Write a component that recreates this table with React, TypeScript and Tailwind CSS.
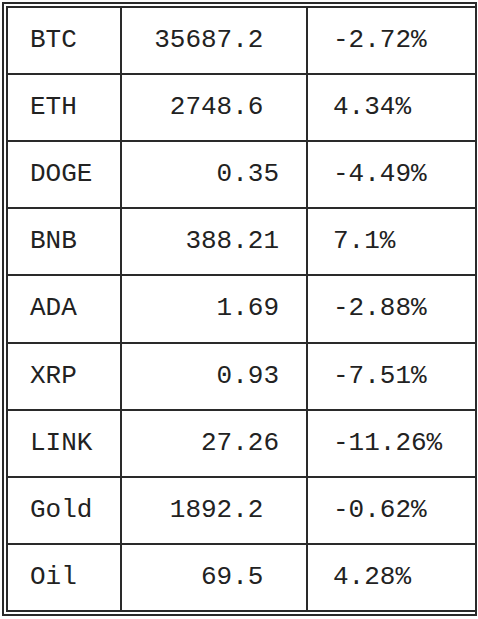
import React from 'react';

type Row = { sym: string; price: string; change: string };

const rows: Row[] = [
  { sym: 'BTC', price: '35687.2', change: '-2.72%' },
  { sym: 'ETH', price: '2748.6', change: '4.34%' },
  { sym: 'DOGE', price: '0.35', change: '-4.49%' },
  { sym: 'BNB', price: '388.21', change: '7.1%' },
  { sym: 'ADA', price: '1.69', change: '-2.88%' },
  { sym: 'XRP', price: '0.93', change: '-7.51%' },
  { sym: 'LINK', price: '27.26', change: '-11.26%' },
  { sym: 'Gold', price: '1892.2', change: '-0.62%' },
  { sym: 'Oil', price: '69.5', change: '4.28%' },
];

// pad to two decimals with spaces so the points line up
function padPrice(p: string) {
  const dec = p.split('.')[1] || '';
  return p + '\u00a0'.repeat(Math.max(0, 2 - dec.length));
}

export default function App() {
  return (
    <div className="w-[478px] h-[619px] bg-white pl-[2px] pt-[2px] font-['Liberation_Mono',monospace] text-[26px] text-[#222]">
      <div className="w-[475px] border-2 border-[#2a2a2a] p-[2px] pr-0">
        <div className="grid grid-cols-[114px_186px_1fr] grid-rows-[repeat(9,1fr)] h-[606px] border-l-2 border-t-2 border-[#2a2a2a]">
          {rows.map((r) => (
            <React.Fragment key={r.sym}>
              <div className="flex items-center pl-[22px] border-r-2 border-b-2 border-[#2a2a2a]">
                {r.sym}
              </div>
              <div className="flex items-center justify-end pr-[27px] whitespace-pre border-r-2 border-b-2 border-[#2a2a2a]">
                {padPrice(r.price)}
              </div>
              <div className="flex items-center pl-[25px] border-b-2 border-[#2a2a2a]">
                {r.change}
              </div>
            </React.Fragment>
          ))}
        </div>
      </div>
    </div>
  );
}
